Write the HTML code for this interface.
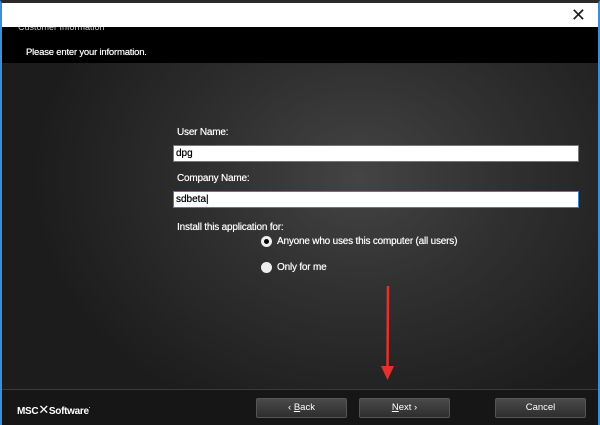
<!DOCTYPE html>
<html><head><style>
*{margin:0;padding:0;box-sizing:border-box}
body{width:600px;height:425px;overflow:hidden;background:#1b1b1b;font-family:"Liberation Sans",sans-serif;position:relative}
.frame{position:absolute;left:0;top:0;width:600px;height:425px;border-left:2px solid #3a8fd6;border-right:2px solid #3a8fd6;border-top:3px solid #2a2a2a}
.title{position:absolute;left:2px;top:3px;width:596px;height:24px;background:#fff}
.x{position:absolute;right:12px;top:2px;font-size:18px;color:#222}
.head{position:absolute;left:2px;top:27px;width:596px;height:36px;background:#000;color:#fff;overflow:hidden}
.body{position:absolute;left:2px;top:63px;width:596px;height:327px;background:radial-gradient(ellipse 55% 80% at 60% 35%,#444 0%,#303030 45%,#1c1c1c 100%)}
.foot{position:absolute;left:2px;top:389px;width:596px;height:36px;background:#161616;border-top:1px solid #3a3a3a}
.lbl{position:absolute;color:#fff;font-size:10px;text-shadow:0 0 0.5px #fff;letter-spacing:-0.2px}
.inp{position:absolute;left:173px;width:406px;height:17px;background:#fff;border:1px solid #777;font-size:10px;color:#000;padding:2px 2px;text-shadow:0 0 0.5px #000}
.radio{position:absolute;width:11px;height:11px;border-radius:50%;background:#eee}
.btn{position:absolute;top:398px;width:91px;height:20px;background:linear-gradient(#4a4a4a,#2e2e2e);border:1px solid #555;border-radius:2px;color:#fff;font-size:9.5px;text-align:center;line-height:18px}
</style></head><body>
<div class="title"><div class="x">✕</div></div>
<div class="head">
<div style="position:absolute;left:16px;top:-5px;font-size:9px;color:#ccc">Customer Information</div>
<div class="lbl" style="left:24px;top:20px;font-size:9.5px">Please enter your information.</div>
</div>
<div class="body"></div>
<div class="lbl" style="left:177px;top:127px">User Name:</div>
<div class="inp" style="top:145px">dpg</div>
<div class="lbl" style="left:177px;top:173px">Company Name:</div>
<div class="inp" style="top:191px;border-color:#3a7fd0">sdbeta|</div>
<div class="lbl" style="left:177px;top:222px">Install this application for:</div>
<div class="radio" style="left:261px;top:236px"><div style="position:absolute;left:3px;top:3px;width:5px;height:5px;border-radius:50%;background:#000"></div></div>
<div class="lbl" style="left:277px;top:236px">Anyone who uses this computer (all users)</div>
<div class="radio" style="left:261px;top:262px"></div>
<div class="lbl" style="left:277px;top:262px">Only for me</div>
<svg style="position:absolute;left:378px;top:284px" width="20" height="98"><line x1="10" y1="2" x2="9.5" y2="86" stroke="#e8302a" stroke-width="2.5"/><polygon points="3,82 16,82 9.5,96" fill="#e8302a"/></svg>
<div class="foot"></div>
<div style="position:absolute;left:17px;top:402px;color:#fff;font-size:10px;font-weight:bold;letter-spacing:-0.3px">MSC<span style="font-weight:normal;font-size:13px">✕</span>Software<sup style="font-size:5px">·</sup></div>
<div class="btn" style="left:256px">‹ <u>B</u>ack</div>
<div class="btn" style="left:359px"><u>N</u>ext ›</div>
<div class="btn" style="left:495px">Cancel</div>
<div class="frame"></div>
</body></html>
